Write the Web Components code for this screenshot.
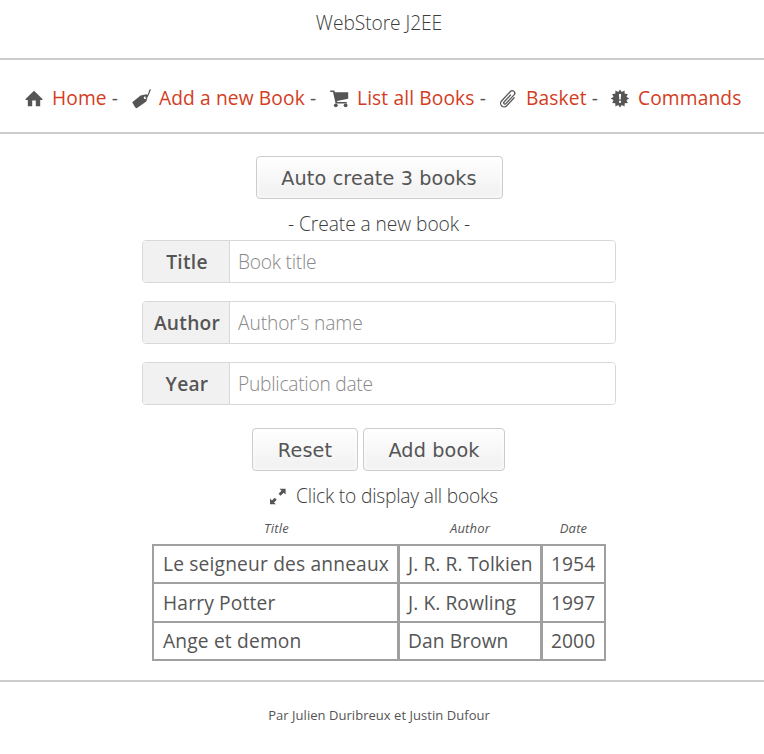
<!DOCTYPE html>
<html lang="en">
<head>
<meta charset="utf-8">
<title>WebStore J2EE</title>
<style>
html,body{margin:0;background:#fff}
body{font:300 19.2px/30px "Open Sans",sans-serif;color:#555;width:764px;height:754px;overflow:hidden}
</style>
</head>
<body>
<web-store></web-store>
<script>
const define = (name, html, init) => customElements.define(name, class extends HTMLElement {
  connectedCallback() {
    if (this.shadowRoot) return;
    this.attachShadow({mode: "open"}).innerHTML = typeof html === "function" ? html(this) : html;
    if (init) init(this, this.shadowRoot);
  }
});

const ICONS = {
  home: '<path d="M0.3 9.2 9 .8l8.700 8.400-.6.800H15.200V16.200h-4.400V10.600H7.200v5.600H2.800V10H.9z"/>',
  tag: '<path fill-rule="evenodd" d="M.2 12.200 8.600 5.500 14.600 4.200Q16.300 4.900 15.700 6.700L14.300 11.400 5 18.100Q3.600 18.400 2.800 16.800zM13 6.500a1.300 1.300 0 1 0 .1 2.600 1.300 1.300 0 0 0-.1-2.600z"/><path d="M13.500 7.500C18.200 5.200 16 2 18.500-.5" fill="none" stroke="currentColor" stroke-width="1.200"/>',
  cart: '<path d="M.2.500H4.300L5 2.200H18.200V8.800L7 11.100 7.200 12H16.800V13.600H5.600L3 2.100H.2z"/><circle cx="5.800" cy="15.300" r="1.900"/><circle cx="15.600" cy="15.300" r="1.900"/>',
  clip: '<path transform="translate(9.200 9) rotate(43)" d="M3.500-5V6A3.500 3.500 0 0 1-3.500 6V-7A2.500 2.500 0 0 1 1.500-7V5A1.250 1.250 0 0 1-1 5V-4.500" fill="none" stroke="currentColor" stroke-width="1.250" stroke-linecap="round"/>',
  expand: '<path d="M10.600.800H16.600V6.500L14.600 4.700 11.600 7.700 9.500 5.700 12.500 2.700zM1 10.600 2.900 12.500 5.700 9.700 7.800 11.700 5 14.500 6.900 16.200H1z"/>'
};
{
  let pts = "";
  for (let i = 0; i < 24; i++) {
    const a = i * Math.PI / 12, r = i % 2 ? 6.7 : 9.1;
    pts += (9 + r * Math.cos(a)).toFixed(2) + "," + (8.5 + r * Math.sin(a)).toFixed(2) + " ";
  }
  ICONS.badge = `<polygon points="${pts}"/><path d="M7.900 4h2.200l-.4 5.500H8.300zM8 10.800h2v1.900H8z" fill="#fff"/>`;
}

define("store-icon", `<style>:host{display:block;flex:none;width:19px;height:18px;color:#555}svg{display:block;overflow:visible;fill:currentColor}</style><svg width="19" height="18" viewBox="0 0 19 18"></svg>`,
  (el, root) => root.querySelector("svg").innerHTML = ICONS[el.getAttribute("name")]);

define("nav-item", el => `<style>
:host{display:flex;align-items:center;white-space:pre;font-weight:400;letter-spacing:.12px}
store-icon{margin:0 8px 0 0}a{color:#d43c22}a,span{margin-top:-2px}</style>
<store-icon name="${el.getAttribute("icon")}"></store-icon><a><slot></slot></a>${el.hasAttribute("last") ? "" : "<span> -</span>"}`);

define("store-button", `<style>
:host{display:block}
button{display:block;box-sizing:border-box;width:100%;height:43px;padding:1px 0 0;border:1px solid #ccc;border-radius:4px;background:linear-gradient(#fff,#f0f0f0);box-shadow:inset 0 0 5px #fff;color:#555;font:400 19.2px/41px "DejaVu Sans",sans-serif;letter-spacing:.14px}
</style><button><slot></slot></button>`);

define("book-field", `<style>
:host{display:flex;box-sizing:border-box;width:474px;height:43px;border:1px solid #d8d8d8;border-radius:4px;overflow:hidden}
label{box-sizing:border-box;width:87px;padding-left:2px;border-right:1px solid #d8d8d8;background:#f1f1f1;text-align:center;font-weight:600;line-height:42px;flex:none;letter-spacing:.25px}
input{flex:1;min-width:0;border:0;padding:0 8px;font:inherit;letter-spacing:var(--hint-spacing,-.25px);background:#fff;outline:0}
input::placeholder{color:#888;opacity:1}
</style><label><slot></slot></label><input>`, (el, root) => root.querySelector("input").placeholder = el.getAttribute("hint"));

define("book-table", `<style>
:host{display:block;width:454px;font-weight:400}
.head,.row{display:grid;grid-template-columns:243px 140px 61px;column-gap:3px}
.head{padding:0 2px;height:30px;font:italic 400 13px/28px "Open Sans",sans-serif;letter-spacing:.2px;text-align:center}
.head span:first-child{padding-left:2px}
.body{display:grid;box-sizing:border-box;height:117px;grid-template-rows:36px 36px 36px;row-gap:2px;background:#a0a0a0;padding:2px}
.row span{background:#fff;padding-left:8px;line-height:36px;white-space:nowrap;letter-spacing:.08px}
.row span:first-child{padding-left:9px;letter-spacing:.17px}
.row:nth-child(2) span{line-height:37px}
.row:nth-child(3){margin-top:1px;height:36px}
</style>
<div class="head"><span>Title</span><span>Author</span><span>Date</span></div>
<div class="body">
<div class="row"><span>Le seigneur des anneaux</span><span>J. R. R. Tolkien</span><span>1954</span></div>
<div class="row"><span>Harry Potter</span><span>J. K. Rowling</span><span>1997</span></div>
<div class="row"><span>Ange et demon</span><span>Dan Brown</span><span>2000</span></div>
</div>`);

define("web-store", `<style>
:host{display:block}
header{border-bottom:2px solid #ccc;padding-right:6px;box-sizing:border-box;height:60px;text-align:center;line-height:46px}
header,.sub,.toggle{color:#3c3c3c}
header,.sub{letter-spacing:-.06px}
nav{display:grid;grid-template-columns:107px 198px 169px 112px auto;align-items:center;box-sizing:border-box;height:74px;padding:5px 0 0 25px;border-bottom:2px solid #ccc}
nav-item{height:66px}
main{display:flex;flex-direction:column;align-items:center;box-sizing:border-box;height:546px;padding:22px 6px 0 0}
.fields{display:grid;gap:18px}
.pair{display:flex;gap:5px;margin:23px 1px 0 0}
.sub{line-height:49px;height:41px}
.toggle{display:flex;align-items:center;height:43px;line-height:50px;gap:8px;padding-left:9px;letter-spacing:-.2px}
.toggle span{position:relative;top:3px}
.toggle store-icon{margin-top:8px}
footer{border-top:2px solid #ccc;padding-right:6px;text-align:center;font-size:13px;font-weight:400;line-height:66px;letter-spacing:.04px}
</style>
<header>WebStore J2EE</header>
<nav><nav-item icon="home">Home</nav-item><nav-item icon="tag">Add a new Book</nav-item><nav-item icon="cart">List all Books</nav-item><nav-item icon="clip">Basket</nav-item><nav-item icon="badge" last>Commands</nav-item></nav>
<main>
<store-button style="width:247px">Auto create 3 books</store-button>
<div class="sub">- Create a new book -</div>
<div class="fields"><book-field hint="Book title">Title</book-field><book-field hint="Author's name" style="--hint-spacing:-.1px">Author</book-field><book-field hint="Publication date">Year</book-field></div>
<div class="pair"><store-button style="width:106px">Reset</store-button><store-button style="width:142px">Add book</store-button></div>
<div class="toggle"><store-icon name="expand"></store-icon><span>Click to display all books</span></div>
<book-table></book-table>
</main>
<footer>Par Julien Duribreux et Justin Dufour</footer>`);
</script>
</body>
</html>
